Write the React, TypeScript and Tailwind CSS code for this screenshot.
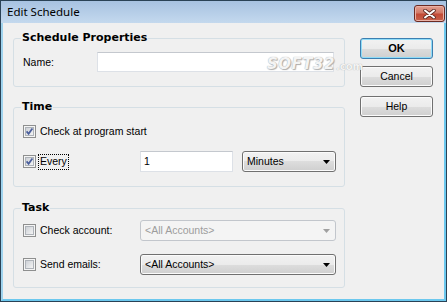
import React from "react";

const txt = "font-['Liberation_Sans',Arial,sans-serif] text-[10.5px] text-black leading-none";

function CheckBox({ checked }: { checked?: boolean }) {
  return (
    <svg width="13" height="13" viewBox="0 0 13 13" className="shrink-0 block">
      <defs>
        <linearGradient id="cbg" x1="0" y1="0" x2="1" y2="1">
          <stop offset="0" stopColor="#cbcfd5" />
          <stop offset="1" stopColor="#f6f6f6" />
        </linearGradient>
      </defs>
      <rect x="0.5" y="0.5" width="12" height="12" fill="#f5f5f5" stroke="#8e8f8f" />
      <rect x="2.5" y="2.5" width="8" height="8" fill="url(#cbg)" stroke="#aeb3b9" />
      {checked && (
        <path d="M3.6 6.4 L5.6 8.8 L9.4 3.4" fill="none" stroke="#4a5e9c" strokeWidth="1.7" />
      )}
    </svg>
  );
}

function Arrow({ disabled }: { disabled?: boolean }) {
  return (
    <svg width="7" height="4" viewBox="0 0 7 4" className="block">
      <path d="M0 0 H7 L3.5 4 Z" fill={disabled ? "#a0a0a0" : "#000"} />
    </svg>
  );
}

function Combo({ label, w, disabled }: { label: string; w: string; disabled?: boolean }) {
  return (
    <div
      className={
        "h-[21px] rounded-[3px] border flex items-center justify-between pl-[4px] pr-[5px] " +
        w +
        " " +
        (disabled
          ? "border-[#c2c6cc] bg-[#f4f4f4] text-[#9d9d9d]"
          : "border-[#707070] bg-[linear-gradient(#f2f2f2_0%,#ebebeb_50%,#dddddd_50%,#cfcfcf_100%)] shadow-[inset_0_0_0_1px_#fbfbfb]")
      }
    >
      <span className={txt + (disabled ? " !text-[#9d9d9d]" : "")}>{label}</span>
      <Arrow disabled={disabled} />
    </div>
  );
}

function Group({ title, h, mt, children }: { title: string; h: string; mt?: string; children: React.ReactNode }) {
  return (
    <div className={"relative w-[332px] border border-[#d5dfe5] rounded-[3px] " + h + " " + (mt || "")}>
      <div className="absolute left-[7px] top-[-8px] bg-[#f0f0f0] px-[1px] font-['DejaVu_Sans',sans-serif] font-bold text-[11px] leading-[14px] text-black">
        {title}
      </div>
      {children}
    </div>
  );
}

function Btn({ label, def, mt }: { label: string; def?: boolean; mt?: string }) {
  return (
    <div
      className={
        "w-[73px] h-[21px] rounded-[3px] border flex items-center justify-center bg-[linear-gradient(#f2f2f2_0%,#ebebeb_50%,#dddddd_50%,#cfcfcf_100%)] " +
        (def
          ? "border-[#3c7fb1] shadow-[inset_0_0_0_1px_#8fdcf8] "
          : "border-[#707070] shadow-[inset_0_0_0_1px_#fbfbfb] ") +
        (mt || "")
      }
    >
      <span className={txt + (def ? " font-bold text-[11px]" : "")}>{label}</span>
    </div>
  );
}

export default function App() {
  return (
    <div className="relative w-[447px] h-[302px] border border-[#2a4256] flex flex-col overflow-hidden">
      {/* title bar */}
      <div className="h-[22px] shrink-0 bg-[linear-gradient(#a7c2e1,#c4d9ee)] flex items-center justify-between pl-[6px] pr-[1px]">
        <span className="font-['Noto_Sans',sans-serif] text-[11.5px] text-black leading-none">Edit Schedule</span>
        <div className="w-[31px] h-[17px] mt-[3px] rounded-[3px] border border-[#6b2a22] bg-[linear-gradient(#e3a091_0%,#d27a68_45%,#c24a36_55%,#c8634c_100%)] shadow-[inset_0_0_0_1px_#eab2a6] flex items-center justify-center">
          <svg width="13" height="10" viewBox="0 0 13 10">
            <path d="M2 1.5 L11 8.5 M11 1.5 L2 8.5" stroke="#5a2a24" strokeWidth="3.6" strokeLinecap="round" />
            <path d="M2 1.5 L11 8.5 M11 1.5 L2 8.5" stroke="#ffffff" strokeWidth="2" strokeLinecap="round" />
          </svg>
        </div>
      </div>
      {/* body */}
      <div className="flex-1 flex border-x-2 border-b-2 border-[#6cc8ee] border-l-[#9fd3ee] bg-[#f0f0f0] pt-[15px] pl-[10px]">
        <div className="flex flex-col">
          <Group title="Schedule Properties" h="h-[49px]">
            <div className="flex items-center mt-[13px] pl-[9px] h-[20px]">
              <span className={txt + " w-[74px]"}>Name:</span>
              <div className="w-[237px] h-[20px] bg-white border border-[#dde1e7] border-t-[#c4c8ce]" />
            </div>
          </Group>
          <Group title="Time" h="h-[80px]" mt="mt-[20px]">
            <div className="flex items-center mt-[17px] pl-[9px] h-[13px]">
              <CheckBox checked />
              <span className={txt + " ml-[4px]"}>Check at program start</span>
            </div>
            <div className="flex items-center mt-[13px] pl-[9px] h-[21px]">
              <div className="w-[117px] flex items-center">
                <CheckBox checked />
                <span className={txt + " ml-[2px] px-[1px] h-[16px] flex items-center border border-dotted border-black"}>Every</span>
              </div>
              <div className="w-[93px] h-[21px] bg-white border border-[#dde1e7] border-t-[#c4c8ce] flex items-center pl-[3px]">
                <span className={txt}>1</span>
              </div>
              <div className="ml-[9px]">
                <Combo label="Minutes" w="w-[94px]" />
              </div>
            </div>
          </Group>
          <Group title="Task" h="h-[80px]" mt="mt-[21px]">
            <div className="flex items-center mt-[11px] pl-[9px] h-[21px]">
              <div className="w-[117px] flex items-center">
                <CheckBox />
                <span className={txt + " ml-[4px]"}>Check account:</span>
              </div>
              <Combo label="<All Accounts>" w="w-[196px]" disabled />
            </div>
            <div className="flex items-center mt-[13px] pl-[9px] h-[21px]">
              <div className="w-[117px] flex items-center">
                <CheckBox />
                <span className={txt + " ml-[4px]"}>Send emails:</span>
              </div>
              <Combo label="<All Accounts>" w="w-[196px]" />
            </div>
          </Group>
        </div>
        <div className="flex flex-col ml-[15px]">
          <Btn label="OK" def />
          <Btn label="Cancel" mt="mt-[7px]" />
          <Btn label="Help" mt="mt-[9px]" />
        </div>
      </div>
      {/* watermark */}
      <div className="absolute left-[266px] top-[56px] flex items-end pointer-events-none select-none">
        <span className="font-['DejaVu_Sans',sans-serif] font-bold italic text-[15px] leading-none text-[#f4f4f4] [text-shadow:0_0_1px_#9a9a9a,1px_1px_1px_#b0b0b0] tracking-[0.5px]">SOFT32</span>
        <span className="font-['DejaVu_Sans',sans-serif] font-bold text-[10px] leading-none text-[#f4f4f4] [text-shadow:0_0_1px_#9a9a9a] ml-[1px]">.com</span>
      </div>
    </div>
  );
}
